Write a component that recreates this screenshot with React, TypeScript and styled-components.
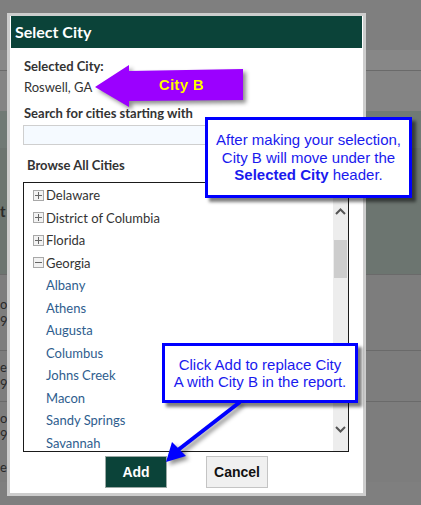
import React from 'react';
import styled, { createGlobalStyle } from 'styled-components';

const GlobalStyle = createGlobalStyle`
  html, body {
    margin: 0;
    padding: 0;
    background: #7f7f7f;
  }
`;

const states = ['Delaware', 'District of Columbia', 'Florida'];
const cities = [
  'Albany',
  'Athens',
  'Augusta',
  'Columbus',
  'Johns Creek',
  'Macon',
  'Sandy Springs',
  'Savannah',
];

interface BandProps {
  h: number;
  bg: string;
  line?: boolean;
}

const App = (): JSX.Element => {
  return (
    <Page>
      <GlobalStyle />
      <Backdrop>
        <Band h={50} bg="#7f7f7f" />
        <Band h={20} bg="#878787" line />
        <Band h={40} bg="#848484" />
        <Band h={37} bg="#707a75" />
        <Band h={126} bg="#6c7570" line>
          <BgText bold>t</BgText>
        </Band>
        <Band h={75} bg="#7d7d7d" line>
          <BgText>or</BgText>
          <BgText>95</BgText>
        </Band>
        <Band h={50} bg="#7d7d7d" line>
          <BgText>e</BgText>
          <BgText>95</BgText>
        </Band>
        <Band h={50} bg="#7d7d7d">
          <BgText>or</BgText>
          <BgText>95</BgText>
        </Band>
        <Band h={30} bg="#7d7d7d">
          <BgText>e</BgText>
        </Band>
      </Backdrop>

      <Dialog>
        <Header>Select City</Header>
        <Body>
          <Label>Selected City:</Label>
          <Value>Roswell, GA</Value>
          <Label top={10}>Search for cities starting with</Label>
          <SearchInput />
          <Label top={12} indent={3}>
            Browse All Cities
          </Label>
          <ListBox>
            <List>
              {states.map((s) => (
                <StateRow key={s}>
                  <Toggle>
                    <svg width="7" height="7" viewBox="0 0 7 7">
                      <path d="M0 3.5h7M3.5 0v7" stroke="#666" strokeWidth="1" />
                    </svg>
                  </Toggle>
                  {s}
                </StateRow>
              ))}
              <StateRow>
                <Toggle>
                  <svg width="7" height="7" viewBox="0 0 7 7">
                    <path d="M0 3.5h7" stroke="#666" strokeWidth="1" />
                  </svg>
                </Toggle>
                Georgia
              </StateRow>
              {cities.map((c) => (
                <CityRow key={c}>{c}</CityRow>
              ))}
            </List>
            <Scrollbar>
              <ScrollArrow>
                <svg width="11" height="7" viewBox="0 0 11 7">
                  <path d="M1 6l4.5-4.5L10 6" fill="none" stroke="#555" strokeWidth="2" />
                </svg>
              </ScrollArrow>
              <Track>
                <Thumb />
              </Track>
              <ScrollArrow>
                <svg width="11" height="7" viewBox="0 0 11 7">
                  <path d="M1 1l4.5 4.5L10 1" fill="none" stroke="#555" strokeWidth="2" />
                </svg>
              </ScrollArrow>
            </Scrollbar>
          </ListBox>
          <Buttons>
            <Button primary>Add</Button>
            <Button>Cancel</Button>
          </Buttons>
        </Body>
      </Dialog>

      <PurpleArrow>
        <svg width="160" height="50" viewBox="0 0 160 50">
          <polygon
            points="2,24 36,2 36,8 150,6 150,37 36,38 36,44"
            fill="#9b00ff"
          />
        </svg>
        <ArrowLabel>City B</ArrowLabel>
      </PurpleArrow>

      <Callout left={205} top={117} width={207} height={81}>
        <CalloutText>
          After making your selection,
          <br />
          City B will move under the
          <br />
          <b>Selected City</b> header.
        </CalloutText>
      </Callout>

      <Callout left={162} top={343} width={196} height={60}>
        <CalloutText>
          Click Add to replace City
          <br />
          A with City B in the report.
        </CalloutText>
      </Callout>

      <Pointer>
        <svg width="90" height="66" viewBox="0 0 90 66">
          <line x1="80" y1="2" x2="18" y2="50" stroke="#0000ff" strokeWidth="4" />
          <polygon points="6,62 12,42 26,56" fill="#0000ff" />
        </svg>
      </Pointer>
    </Page>
  );
};

const Page = styled.div`
  position: relative;
  width: 421px;
  height: 505px;
  overflow: hidden;
  background: #7f7f7f;
`;

const Backdrop = styled.div`
  display: flex;
  flex-direction: column;
`;

const Band = styled.div<BandProps>`
  height: ${(p) => p.h}px;
  flex-shrink: 0;
  background: ${(p) => p.bg};
  border-bottom: ${(p) => (p.line ? '1px solid #6a6a6a' : 'none')};
  display: flex;
  flex-direction: column;
  justify-content: center;
  gap: 2px;
  font-family: Lato, 'Noto Sans', sans-serif;
  font-size: 13px;
  color: #2a2a2a;
`;

const BgText = styled.span<{ bold?: boolean }>`
  font-weight: ${(p) => (p.bold ? 700 : 400)};
  font-size: ${(p) => (p.bold ? '15px' : '13px')};
  line-height: 15px;
`;

const Dialog = styled.div`
  position: absolute;
  left: 7px;
  top: 13px;
  width: 359px;
  height: 483px;
  box-sizing: border-box;
  border: 3px solid #cdcdcd;
  background: #fff;
  padding: 0 1px;
  display: flex;
  flex-direction: column;
  font-family: Lato, 'Noto Sans', sans-serif;
`;

const Header = styled.div`
  height: 32px;
  background: #0b4339;
  color: #fff;
  font-weight: 700;
  font-size: 16px;
  line-height: 32px;
  padding-left: 4px;
`;

const Body = styled.div`
  display: flex;
  flex-direction: column;
  padding: 0 13px;
`;

const Label = styled.div<{ top?: number; indent?: number }>`
  margin-top: ${(p) => p.top ?? 10}px;
  padding-left: ${(p) => p.indent ?? 0}px;
  font-size: 13px;
  font-weight: 700;
  line-height: 16px;
  color: #333;
`;

const Value = styled.div`
  margin-top: 5px;
  font-size: 13px;
  line-height: 16px;
  color: #333;
`;

const SearchInput = styled.div`
  margin-top: 4px;
  height: 20px;
  box-sizing: border-box;
  border: 1px solid #cfcfcf;
  background: #f5faff;
  width: 326px;
  margin-left: -1px;
`;

const ListBox = styled.div`
  margin-top: 9px;
  margin-left: -1px;
  width: 326px;
  height: 270px;
  box-sizing: border-box;
  border: 1px solid #1a1a1a;
  display: flex;
  overflow: hidden;
`;

const List = styled.div`
  flex: 1;
  padding-top: 1px;
  overflow: hidden;
`;

const StateRow = styled.div`
  height: 22.5px;
  display: flex;
  align-items: center;
  padding-left: 9px;
  font-size: 13px;
  color: #333;
`;

const Toggle = styled.span`
  width: 9px;
  height: 9px;
  border: 1px solid #a8a8a8;
  background: #f2f2f2;
  display: flex;
  align-items: center;
  justify-content: center;
  margin-right: 2px;
`;

const CityRow = styled.div`
  height: 22.5px;
  display: flex;
  align-items: center;
  padding-left: 22px;
  font-size: 13px;
  color: #2e5d8e;
`;

const Scrollbar = styled.div`
  width: 15px;
  background: #ededed;
  display: flex;
  flex-direction: column;
`;

const ScrollArrow = styled.div`
  height: 28px;
  display: flex;
  align-items: center;
  justify-content: center;
  &:first-child {
    padding-top: 14px;
  }
  &:last-child {
    padding-bottom: 8px;
  }
`;

const Track = styled.div`
  flex: 1;
  padding-top: 15px;
`;

const Thumb = styled.div`
  height: 38px;
  background: #cdcdcd;
  margin: 0 1px;
`;

const Buttons = styled.div`
  margin-top: 4px;
  display: flex;
  justify-content: center;
  gap: 39px;
`;

const Button = styled.div<{ primary?: boolean }>`
  width: 62px;
  height: 32px;
  box-sizing: border-box;
  border: 1px solid ${(p) => (p.primary ? '#9aa8a4' : '#c4c4c4')};
  background: ${(p) => (p.primary ? '#0b4339' : '#f0f0f0')};
  color: ${(p) => (p.primary ? '#fff' : '#111')};
  font-family: 'Liberation Sans', Arial, sans-serif;
  font-weight: 700;
  font-size: 14px;
  display: flex;
  align-items: center;
  justify-content: center;
`;

const PurpleArrow = styled.div`
  position: absolute;
  left: 93px;
  top: 63px;
  width: 160px;
  height: 50px;
  filter: drop-shadow(3px 3px 2px rgba(0, 0, 0, 0.45));
  svg {
    display: block;
  }
`;

const ArrowLabel = styled.span`
  position: absolute;
  left: 66px;
  top: 13px;
  font-family: 'Liberation Sans', Arial, sans-serif;
  font-weight: 700;
  font-size: 15px;
  color: #ffff00;
  letter-spacing: 0.3px;
`;

const Callout = styled.div<{ left: number; top: number; width: number; height: number }>`
  position: absolute;
  left: ${(p) => p.left}px;
  top: ${(p) => p.top}px;
  width: ${(p) => p.width}px;
  height: ${(p) => p.height}px;
  box-sizing: border-box;
  border: 3px solid #0000ff;
  background: #fff;
  box-shadow: 4px 4px 3px rgba(0, 0, 0, 0.5);
  display: flex;
  align-items: center;
  justify-content: center;
`;

const CalloutText = styled.div`
  text-align: center;
  font-family: 'Liberation Sans', Arial, sans-serif;
  font-size: 15px;
  line-height: 17.5px;
  color: #1a1aee;
  white-space: nowrap;
  b {
    font-weight: 700;
  }
`;

const Pointer = styled.div`
  position: absolute;
  left: 160px;
  top: 400px;
  filter: drop-shadow(3px 3px 2px rgba(0, 0, 0, 0.45));
  svg {
    display: block;
  }
`;

export default App;
